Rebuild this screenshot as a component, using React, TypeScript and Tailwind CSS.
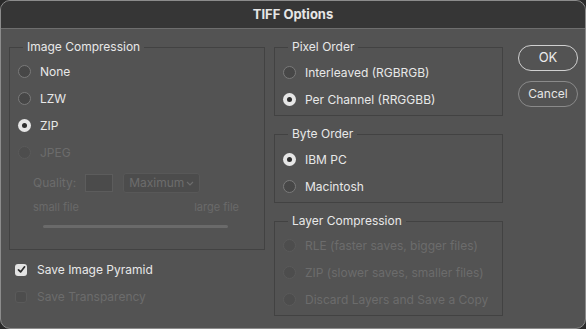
import React from "react";

type RS = "on" | "off" | "disabled";

function Radio({ state }: { state: RS }) {
  if (state === "on") {
    return (
      <div className="w-[13px] h-[13px] rounded-full bg-[#e6e6e6] flex items-center justify-center shrink-0">
        <div className="w-[5px] h-[5px] rounded-full bg-[#2e2e2e]" />
      </div>
    );
  }
  if (state === "off") {
    return <div className="w-[13px] h-[13px] rounded-full bg-[#474747] border border-[#7a7a7a] shrink-0" />;
  }
  return <div className="w-[13px] h-[13px] rounded-full bg-[#4d4d4d] border border-[#5a5a5a] shrink-0" />;
}

function RadioRow({ state, label }: { state: RS; label: string }) {
  return (
    <div className="h-[27px] flex items-center gap-[9px]">
      <Radio state={state} />
      <span className={state === "disabled" ? "text-[#6c6c6c]" : "text-[#e8e8e8]"}>{label}</span>
    </div>
  );
}

function Legend({ children }: { children: React.ReactNode }) {
  return (
    <legend className="ml-[13px] px-[4px] leading-[16px] text-[#e8e8e8]">{children}</legend>
  );
}

export default function App() {
  return (
    <div className="w-[586px] h-[329px] bg-[#2a2a2a]">
      <div
        className="w-full h-full rounded-[10px] overflow-hidden bg-[#535353] border border-[#8c8c8c] flex flex-col text-[12px]"
        style={{ fontFamily: "Inter, 'Liberation Sans', sans-serif" }}
      >
        <div className="h-[28px] shrink-0 bg-[#363636] border-b border-[#6e6e6e] flex items-center justify-center pt-[1px] text-[13px] font-bold text-[#e6e6e6]">
          TIFF Options
        </div>
        <div className="flex pl-[8px] pt-[10px]">
          {/* Left column */}
          <div className="w-[256px] shrink-0 flex flex-col">
            <fieldset className="border border-[#424242] h-[211px]">
              <Legend>Image Compression</Legend>
              <div className="pl-[8px] pt-[3px] flex flex-col">
                <RadioRow state="off" label="None" />
                <RadioRow state="off" label="LZW" />
                <RadioRow state="on" label="ZIP" />
                <RadioRow state="disabled" label="JPEG" />
                <div className="mt-[7px] h-[20px] flex items-center pl-[15px] text-[#6c6c6c]">
                  <span>Quality:</span>
                  <div className="ml-[9px] w-[28px] h-[18px] bg-[#4b4b4b] border border-[#5c5c5c]" />
                  <div className="ml-[10px] w-[77px] h-[20px] bg-[#4c4c4c] border border-[#585858] rounded-[3px] flex items-center pl-[5px] pr-[5px] justify-between">
                    <span>Maximum</span>
                    <svg width="8" height="5" viewBox="0 0 8 5">
                      <path d="M1 1 L4 4 L7 1" fill="none" stroke="#6c6c6c" strokeWidth="1.2" />
                    </svg>
                  </div>
                </div>
                <div className="mt-[7px] ml-[15px] mr-[25px] flex justify-between text-[11px] leading-[14px] text-[#6a6a6a]">
                  <span>small file</span>
                  <span>large file</span>
                </div>
                <div className="mt-[11px] ml-[25px] w-[185px] h-[3px] rounded-full bg-[#6a6a6a]" />
              </div>
            </fieldset>
            <div className="mt-[6px] pl-[6px] flex flex-col">
              <div className="h-[27px] flex items-center gap-[10px]">
                <div className="w-[12px] h-[12px] rounded-[3px] bg-[#e3e3e3] flex items-center justify-center">
                  <svg width="9" height="9" viewBox="0 0 9 9">
                    <path d="M1.5 4.8 L3.6 6.9 L7.6 1.8" fill="none" stroke="#2c2c2c" strokeWidth="1.7" strokeLinecap="round" strokeLinejoin="round" />
                  </svg>
                </div>
                <span className="text-[#e8e8e8]">Save Image Pyramid</span>
              </div>
              <div className="h-[27px] flex items-center gap-[10px]">
                <div className="w-[12px] h-[12px] rounded-[3px] bg-[#4d4d4d] border border-[#5a5a5a]" />
                <span className="text-[#6c6c6c]">Save Transparency</span>
              </div>
            </div>
          </div>

          {/* Right column */}
          <div className="ml-[9px] w-[229px] shrink-0 flex flex-col">
            <fieldset className="border border-[#424242]">
              <Legend>Pixel Order</Legend>
              <div className="pl-[8px] pt-[4px] pb-[2px] flex flex-col">
                <RadioRow state="off" label="Interleaved (RGBRGB)" />
                <RadioRow state="on" label="Per Channel (RRGGBB)" />
              </div>
            </fieldset>
            <fieldset className="mt-[10px] border border-[#424242]">
              <Legend>Byte Order</Legend>
              <div className="pl-[8px] pt-[4px] pb-[2px] flex flex-col">
                <RadioRow state="on" label="IBM PC" />
                <RadioRow state="off" label="Macintosh" />
              </div>
            </fieldset>
            <fieldset className="mt-[10px] border border-[#424242]">
              <Legend>Layer Compression</Legend>
              <div className="pl-[8px] pt-[3px] pb-[2px] flex flex-col">
                <RadioRow state="disabled" label="RLE (faster saves, bigger files)" />
                <RadioRow state="disabled" label="ZIP (slower saves, smaller files)" />
                <RadioRow state="disabled" label="Discard Layers and Save a Copy" />
              </div>
            </fieldset>
          </div>

          {/* Buttons */}
          <div className="ml-[15px] w-[60px] shrink-0 flex flex-col gap-[10px] mt-[6px]">
            <button className="h-[26px] w-full rounded-full border-[1.5px] border-[#d0d0d0] text-[#ececec] text-[13px] flex items-center justify-center">
              OK
            </button>
            <button className="h-[26px] w-full rounded-full border border-[#8a8a8a] text-[#e6e6e6] text-[12px] flex items-center justify-center">
              Cancel
            </button>
          </div>
        </div>
      </div>
    </div>
  );
}
